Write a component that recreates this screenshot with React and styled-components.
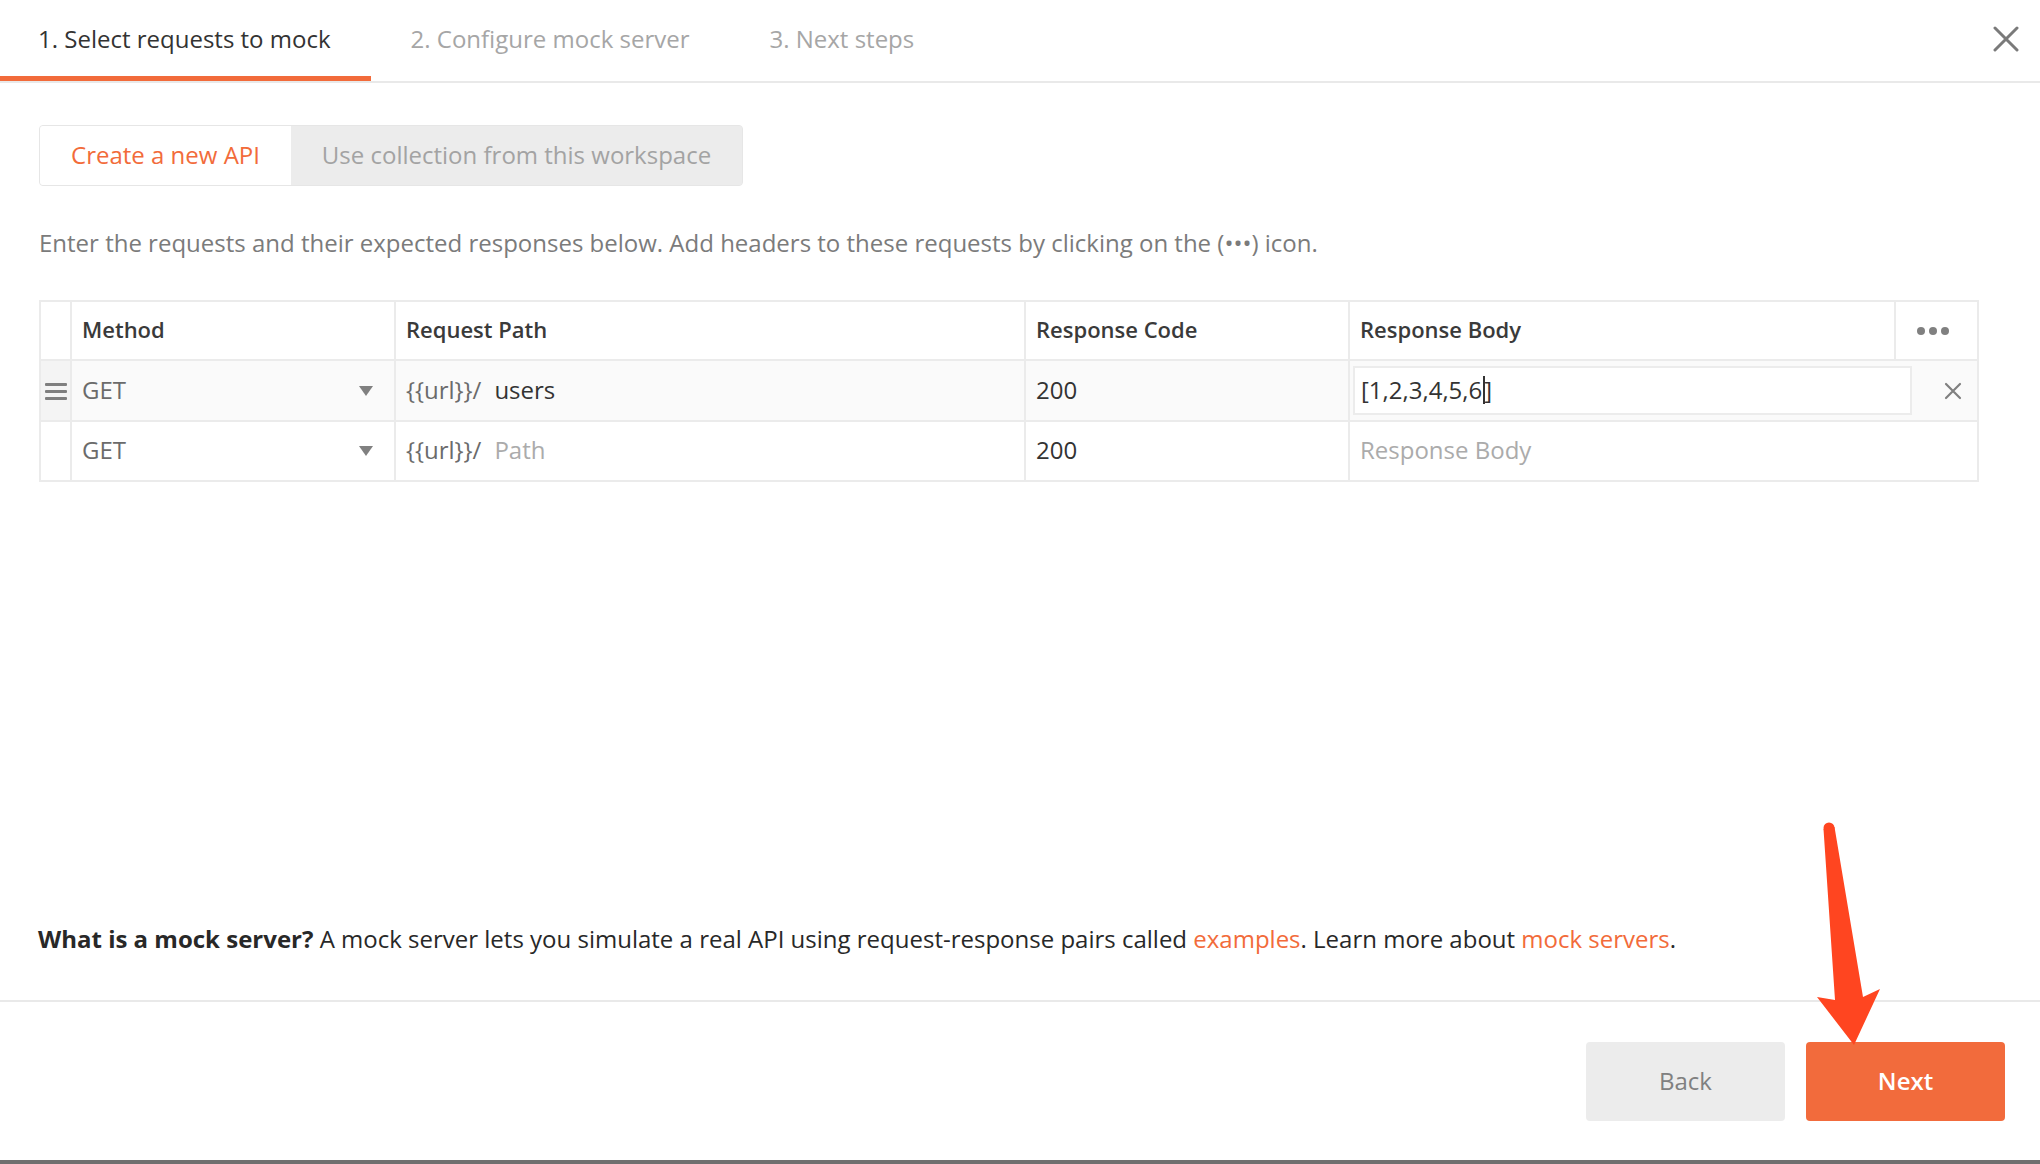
import styled, { createGlobalStyle } from "styled-components";

const ORANGE = "#f26b3a";
const LINE = "#ebebeb";

const GlobalStyle = createGlobalStyle`
  html, body {
    margin: 0;
    padding: 0;
    background: #ffffff;
  }
  body {
    font-family: "Open Sans", "Liberation Sans", sans-serif;
    color: #333333;
  }
  * {
    box-sizing: border-box;
  }
`;

const ROWS = [
  { id: 1, method: "GET", path: "users", code: "200", body: "[1,2,3,4,5,6", active: true },
  { id: 2, method: "GET", path: "", code: "200", body: "", active: false },
];

const App = () => {
  return (
    <Page>
      <GlobalStyle />
      <TabBar>
        <Tab $active>1. Select requests to mock</Tab>
        <Tab>2. Configure mock server</Tab>
        <Tab>3. Next steps</Tab>
        <CloseButton aria-label="Close">
          <svg width="26" height="26" viewBox="0 0 26 26">
            <path d="M2 2 L24 24 M24 2 L2 24" stroke="#7a7a7a" strokeWidth="3" strokeLinecap="round" />
          </svg>
        </CloseButton>
      </TabBar>

      <Main>
        <Segmented>
          <Segment $active>Create a new API</Segment>
          <Segment>Use collection from this workspace</Segment>
        </Segmented>

        <Description>
          Enter the requests and their expected responses below. Add headers to these requests by
          clicking on the (•••) icon.
        </Description>

        <Table>
          <HeadCell />
          <HeadCell>Method</HeadCell>
          <HeadCell>Request Path</HeadCell>
          <HeadCell>Response Code</HeadCell>
          <HeadCell>Response Body</HeadCell>
          <HeadCell $center>
            <Dots>
              <span />
              <span />
              <span />
            </Dots>
          </HeadCell>

          {ROWS.map((row) => (
            <Row key={row.id} row={row} />
          ))}
        </Table>
      </Main>

      <Info>
        <strong>What is a mock server?</strong> A mock server lets you simulate a real API using
        request-response pairs called <Link>examples</Link>. Learn more about{" "}
        <Link>mock servers</Link>.
      </Info>

      <Footer>
        <Button>Back</Button>
        <Button $primary>Next</Button>
      </Footer>
      <BottomBar />

      <Arrow viewBox="1800 815 90 240" width="90" height="240">
        <circle cx="1829" cy="828" r="5.5" fill="#ff4520" />
        <polygon
          points="1823.5,829 1834.5,827 1863,997 1880,989 1854,1045 1817,997 1835,1000"
          fill="#ff4520"
        />
      </Arrow>
    </Page>
  );
};

const Row = ({ row }) => (
  <>
    <Cell $active={row.active} $grip>
      {row.active && (
        <Grip>
          <span />
          <span />
          <span />
        </Grip>
      )}
    </Cell>
    <Cell $active={row.active}>
      <Value $muted>{row.method}</Value>
      <Caret />
    </Cell>
    <Cell $active={row.active}>
      <Value $muted>{"{{url}}/"}</Value>
      <PathValue $placeholder={!row.path}>{row.path || "Path"}</PathValue>
    </Cell>
    <Cell $active={row.active}>
      <Value>{row.code}</Value>
    </Cell>
    <BodyCell $active={row.active}>
      {row.active ? (
        <>
          <BodyInput>
            {row.body}
            <TextCursor />]
          </BodyInput>
          <RemoveButton aria-label="Remove">
            <svg width="18" height="18" viewBox="0 0 18 18">
              <path d="M2 2 L16 16 M16 2 L2 16" stroke="#808080" strokeWidth="2.2" strokeLinecap="round" />
            </svg>
          </RemoveButton>
        </>
      ) : (
        <Placeholder>Response Body</Placeholder>
      )}
    </BodyCell>
  </>
);

export default App;

const Page = styled.div`
  position: relative;
  display: flex;
  flex-direction: column;
  width: 2040px;
  height: 1164px;
  overflow: hidden;
`;

const TabBar = styled.div`
  display: flex;
  align-items: flex-start;
  height: 83px;
  border-bottom: 2px solid #e9e9e9;
`;

const Tab = styled.div`
  height: 81px;
  display: flex;
  align-items: center;
  padding: 0 40px 0 ${({ $active }) => ($active ? "38px" : "40px")};
  font-size: 24px;
  color: ${({ $active }) => ($active ? "#333333" : "#a6a6a6")};
  border-bottom: 5px solid ${({ $active }) => ($active ? ORANGE : "transparent")};
`;

const CloseButton = styled.div`
  margin-left: auto;
  margin-right: 21px;
  height: 78px;
  display: flex;
  align-items: center;
`;

const Main = styled.div`
  flex: 1;
  padding: 42px 61px 0 39px;
`;

const Segmented = styled.div`
  display: inline-flex;
  height: 61px;
  border: 1px solid #e6e6e6;
  border-radius: 4px;
  overflow: hidden;
  background: #ececec;
`;

const Segment = styled.div`
  display: flex;
  align-items: center;
  justify-content: center;
  padding-bottom: 2px;
  width: ${({ $active }) => ($active ? "251px" : "451px")};
  font-size: 24px;
  background: ${({ $active }) => ($active ? "#ffffff" : "#ececec")};
  color: ${({ $active }) => ($active ? ORANGE : "#a3a3a3")};
`;

const Description = styled.p`
  margin: 42px 0 0;
  font-size: 24px;
  line-height: 30px;
  color: #7b7b7b;
`;

const Table = styled.div`
  margin-top: 42px;
  display: grid;
  grid-template-columns: 29px 322px 628px 322px 544px 81px;
  grid-template-rows: 57px 59px 58px;
  gap: 2px;
  padding: 2px;
  background: ${LINE};
  width: 1940px;
`;

const HeadCell = styled.div`
  display: flex;
  align-items: center;
  justify-content: ${({ $center }) => ($center ? "center" : "flex-start")};
  padding: 0 10px 3px;
  background: #ffffff;
  font-size: 22px;
  font-weight: 600;
  color: #3a3a3a;
`;

const Cell = styled.div`
  display: flex;
  align-items: center;
  padding: ${({ $grip }) => ($grip ? "0" : "0 21px 3px 10px")};
  justify-content: ${({ $grip }) => ($grip ? "center" : "flex-start")};
  background: ${({ $active, $grip }) => ($active ? ($grip ? "#f4f4f4" : "#fafafa") : "#ffffff")};
  font-size: 24px;
`;

const BodyCell = styled(Cell)`
  grid-column: span 2;
  padding: 0 15px 0 3px;
  gap: 32px;
`;

const Value = styled.span`
  color: ${({ $muted }) => ($muted ? "#6b6b6b" : "#333333")};
`;

const PathValue = styled.span`
  margin-left: 13px;
  color: ${({ $placeholder }) => ($placeholder ? "#ababab" : "#333333")};
`;

const Placeholder = styled.span`
  padding: 0 0 3px 7px;
  color: #ababab;
`;

const Caret = styled.span`
  margin: 3px 0 0 auto;
  width: 0;
  height: 0;
  border-left: 7px solid transparent;
  border-right: 7px solid transparent;
  border-top: 10px solid #808080;
`;

const Grip = styled.div`
  display: flex;
  flex-direction: column;
  gap: 4px;
  margin-top: 2px;

  span {
    display: block;
    width: 22px;
    height: 3px;
    border-radius: 1px;
    background: #7f7f7f;
  }
`;

const Dots = styled.div`
  display: flex;
  gap: 4px;
  margin: 4px 8px 0 0;

  span {
    display: block;
    width: 8px;
    height: 8px;
    border-radius: 50%;
    background: #808080;
  }
`;

const BodyInput = styled.div`
  display: flex;
  align-items: center;
  width: 560px;
  height: 49px;
  padding: 0 0 2px 6px;
  background: #ffffff;
  border: 2px solid #ececec;
  color: #333333;
`;

const TextCursor = styled.span`
  display: inline-block;
  width: 2px;
  height: 28px;
  margin: 0 -1px 0 1px;
  background: #333333;
`;

const RemoveButton = styled.div`
  display: flex;
  align-items: center;
`;

const Info = styled.p`
  margin: 0 0 46px;
  padding: 0 38px;
  font-size: 24px;
  line-height: 30px;
  color: #282828;

  strong {
    font-weight: 700;
  }
`;

const Link = styled.span`
  color: ${ORANGE};
`;

const Footer = styled.div`
  display: flex;
  justify-content: flex-end;
  gap: 21px;
  padding: 40px 35px 39px;
  border-top: 2px solid #e9e9e9;
`;

const Button = styled.div`
  width: 199px;
  height: 79px;
  display: flex;
  align-items: center;
  justify-content: center;
  padding-bottom: 2px;
  border-radius: 4px;
  font-size: 24px;
  font-weight: ${({ $primary }) => ($primary ? 600 : 400)};
  background: ${({ $primary }) => ($primary ? "#f26b3c" : "#ececec")};
  color: ${({ $primary }) => ($primary ? "#ffffff" : "#808080")};
`;

const BottomBar = styled.div`
  height: 4px;
  background: #6f6f6f;
`;

const Arrow = styled.svg`
  position: absolute;
  left: 1800px;
  top: 815px;
  pointer-events: none;
`;
